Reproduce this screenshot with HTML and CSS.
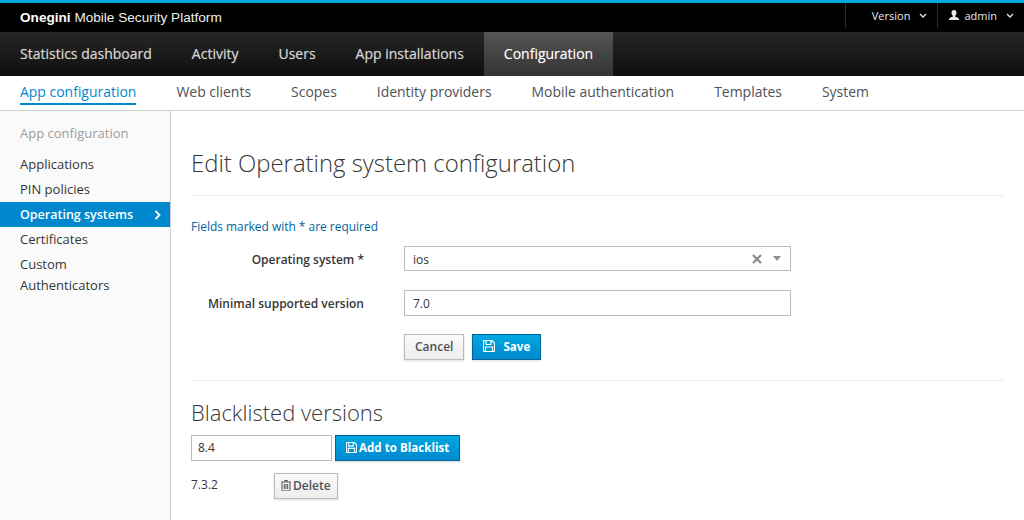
FILE: index.html
```html
<!DOCTYPE html>
<html lang="en">
<head>
<meta charset="UTF-8">
<meta name="viewport" content="width=device-width, initial-scale=1.0">
<title>Onegini Mobile Security Platform</title>
<link rel="stylesheet" href="styles.css">
</head>
<body>
<header class="topbar">
    <div class="brand"><b>Onegini</b> Mobile Security Platform</div>
    <div class="utility">
        <div class="utility-item">Version
            <svg class="chevron" width="8" height="5" viewBox="0 0 8 5"><path d="M1 1l3 3 3-3" fill="none" stroke="currentColor" stroke-width="1.3"/></svg>
        </div>
        <div class="utility-item">
            <svg class="user-icon" width="10" height="11" viewBox="0 0 10 11"><path d="M5 0c1.700 0 2.500 1.200 2.500 2.800 0 1.300-.6 2.300-1.300 2.900v1c1.300.4 3.800 1 3.800 2.300v1H0V9c0-1.300 2.500-1.900 3.800-2.300v-1C3.100 5.100 2.500 4.100 2.500 2.800 2.500 1.200 3.300 0 5 0z" fill="currentColor"/></svg>
            admin
            <svg class="chevron" width="8" height="5" viewBox="0 0 8 5"><path d="M1 1l3 3 3-3" fill="none" stroke="currentColor" stroke-width="1.3"/></svg>
        </div>
    </div>
</header>

<nav class="mainnav">
    <a href="#">Statistics dashboard</a>
    <a href="#">Activity</a>
    <a href="#">Users</a>
    <a href="#">App installations</a>
    <a href="#" class="active">Configuration</a>
</nav>

<nav class="subnav">
    <a href="#" class="active">App configuration</a>
    <a href="#">Web clients</a>
    <a href="#">Scopes</a>
    <a href="#">Identity providers</a>
    <a href="#">Mobile authentication</a>
    <a href="#">Templates</a>
    <a href="#">System</a>
</nav>

<div class="page">
    <aside class="sidebar">
        <div class="side-title">App configuration</div>
        <ul class="side-list">
            <li>Applications</li>
            <li>PIN policies</li>
            <li class="active">Operating systems
                <svg width="7" height="10" viewBox="0 0 7 10"><path d="M1.500 1l4 4-4 4" fill="none" stroke="currentColor" stroke-width="1.800"/></svg>
            </li>
            <li>Certificates</li>
            <li class="tall">Custom Authenticators</li>
        </ul>
    </aside>

    <main class="content">
        <h1>Edit Operating system configuration</h1>
        <p class="required-note">Fields marked with * are required</p>

        <form class="os-form">
            <div class="form-row">
                <label class="select-label">Operating system *</label>
                <div class="field select-field">
                    <span>ios</span>
                    <svg class="clear" width="10" height="10" viewBox="0 0 10 10"><path d="M1 1l8 8M9 1l-8 8" stroke="currentColor" stroke-width="2.200"/></svg>
                    <svg class="caret" width="8" height="5" viewBox="0 0 8 5"><path d="M0 0h8L4 5z" fill="currentColor"/></svg>
                </div>
            </div>
            <div class="form-row">
                <label>Minimal supported version</label>
                <div class="field text-field">7.0</div>
            </div>
            <div class="form-actions">
                <button type="button" class="btn">Cancel</button>
                <button type="button" class="btn btn-primary btn-save">
                    <svg width="12" height="12" viewBox="0 0 12 12"><path d="M1.500.5h7.500l2.500 2.500v7.500a1 1 0 0 1-1 1h-9a1 1 0 0 1-1-1v-9a1 1 0 0 1 1-1z M3 1v3.500h5V1 M2.500 11V7h7v4" fill="none" stroke="currentColor" stroke-width="1.200"/></svg>
                    Save
                </button>
            </div>
        </form>

        <h2>Blacklisted versions</h2>
        <div class="add-row">
            <div class="field small-field">8.4</div>
            <button type="button" class="btn btn-primary">
                <svg width="11" height="11" viewBox="0 0 12 12"><path d="M1.500.5h7.500l2.500 2.500v7.500a1 1 0 0 1-1 1h-9a1 1 0 0 1-1-1v-9a1 1 0 0 1 1-1z M3 1v3.500h5V1 M2.500 11V7h7v4" fill="none" stroke="currentColor" stroke-width="1.200"/></svg>
                Add to Blacklist
            </button>
        </div>
        <div class="version-row">
            <span class="version">7.3.2</span>
            <button type="button" class="btn">
                <svg width="10" height="11" viewBox="0 0 10 11"><path d="M3.500 1.500V.5h3v1M0 2h10M1 2.500V10a1 1 0 0 0 1 1h6a1 1 0 0 0 1-1V2.500M3.300 4v5M5 4v5M6.700 4v5" fill="none" stroke="currentColor" stroke-width="1"/></svg>
                Delete
            </button>
        </div>
    </main>
</div>
</body>
</html>
```

FILE: styles.css
```css
* {
    box-sizing: border-box;
    margin: 0;
    padding: 0;
}

html, body {
    height: 520px;
    overflow: hidden;
}

body {
    font-family: 'Open Sans', sans-serif;
    font-size: 13px;
    color: #363636;
    background: #fff;
    display: flex;
    flex-direction: column;
}

a {
    text-decoration: none;
    color: inherit;
}

/* Top bar */
.topbar {
    height: 32px;
    flex: none;
    display: flex;
    justify-content: space-between;
    background: #000;
    border-top: 3px solid #00a8e1;
    color: #e8e8e8;
}

.brand {
    font-family: 'Liberation Sans', sans-serif;
    font-size: 13.600px;
    line-height: 29px;
    padding-left: 20px;
    color: #eee;
}

.brand b {
    color: #fff;
}

.utility {
    display: flex;
    height: 25px;
    font-size: 11px;
}

.utility-item {
    display: flex;
    align-items: center;
    gap: 5px;
    line-height: 25px;
    padding: 0 10px 0 26px;
    border-left: 1px solid #2c2c2c;
}

.utility-item + .utility-item {
    padding: 0 10px 0 11px;
}

.chevron {
    margin-left: 4px;
}

/* Main nav */
.mainnav {
    height: 44px;
    flex: none;
    display: flex;
    background: linear-gradient(#262626, #0f0f0f);
}

.mainnav a {
    padding: 0 20px;
    line-height: 44px;
    font-size: 14px;
    color: #d6d6d6;
    text-shadow: 0 0 1px rgba(214, 214, 214, 0.5);
}

.mainnav a.active {
    background: linear-gradient(#555, #333);
    color: #fff;
}

/* Sub nav */
.subnav {
    height: 35px;
    flex: none;
    display: flex;
    gap: 40px;
    padding-left: 20px;
    border-bottom: 1px solid #d1d1d1;
}

.subnav a {
    height: 29px;
    line-height: 31px;
    font-size: 13.960px;
    color: #4d5258;
}

.subnav a.active {
    color: #0088ce;
    border-bottom: 2px solid #0088ce;
}

/* Page */
.page {
    flex: 1;
    display: flex;
    min-height: 0;
}

.sidebar {
    width: 171px;
    flex: none;
    background: #fafafa;
    border-right: 1px solid #d1d1d1;
    padding-top: 12px;
}

.side-title {
    padding-left: 20px;
    line-height: 20px;
    color: #9c9c9c;
}

.side-list {
    list-style: none;
    margin-top: 9px;
}

.side-list li {
    height: 25px;
    line-height: 25px;
    padding-left: 20px;
}

.side-list li.tall {
    height: auto;
    padding-right: 40px;
    line-height: 21px;
    padding-top: 2px;
}

.side-list li.active {
    display: flex;
    justify-content: space-between;
    align-items: center;
    padding-right: 9px;
    background: #0088ce;
    color: #fff;
    font-size: 12.500px;
    font-weight: 600;
}

.content {
    flex: 1;
    padding: 0 20px;
}

h1 {
    font-size: 23.900px;
    font-weight: 300;
    line-height: 32px;
    padding-top: 36px;
    height: 85px;
    border-bottom: 1px solid #ededed;
}

.required-note {
    margin-top: 22px;
    line-height: 18px;
    font-size: 11.950px;
    color: #00659c;
}

/* Form */
.os-form {
    padding: 10px 0 20px;
    border-bottom: 1px solid #ededed;
}

.form-row {
    display: flex;
    align-items: center;
    gap: 40px;
    margin-bottom: 19px;
}

.form-row label {
    width: 173px;
    flex: none;
    text-align: right;
    font-size: 12px;
    font-weight: 600;
}

.form-row .select-label {
    padding-top: 2px;
}

.field {
    width: 387px;
    height: 25px;
    line-height: 23px;
    padding-left: 8px;
    border: 1px solid #bbb;
    font-size: 12px;
    background: #fff;
}

.text-field {
    height: 26px;
    line-height: 26px;
}

.select-field {
    display: flex;
    align-items: center;
}

.select-field span {
    flex: 1;
    padding-top: 2px;
    line-height: 23px;
}

.clear {
    color: #888;
    margin-right: 11px;
}

.caret {
    color: #8b8d8f;
    margin-right: 9px;
}

.form-actions {
    display: flex;
    gap: 8px;
    padding-left: 213px;
    margin-top: -1px;
}

.btn {
    height: 26px;
    padding: 0 10px 2px;
    font-family: inherit;
    font-size: 12px;
    font-weight: 600;
    color: #4d5258;
    background: linear-gradient(#fafafa, #ededed);
    border: 1px solid #bbb;
    box-shadow: 0 1px 2px rgba(0, 0, 0, 0.15);
    display: inline-flex;
    align-items: center;
    gap: 2px;
}

.btn-primary {
    color: #fff;
    font-size: 11.600px;
    font-weight: 700;
    background: linear-gradient(#00a8e1, #0088ce);
    border-color: #00659c;
}

.btn-save {
    gap: 8px;
}

/* Blacklist */
h2 {
    font-size: 22px;
    font-weight: 300;
    line-height: 28px;
    margin-top: 17px;
}

.add-row {
    display: flex;
    gap: 3px;
    margin-top: 9px;
}

.small-field {
    width: 141px;
    height: 26px;
    padding-left: 6px;
    line-height: 24px;
}

.version-row {
    display: flex;
    align-items: center;
    margin-top: 12px;
}

.version {
    width: 83px;
    font-size: 12px;
    margin-top: -4px;
}

.version-row .btn {
    padding: 0 6px 2px;
}
```
